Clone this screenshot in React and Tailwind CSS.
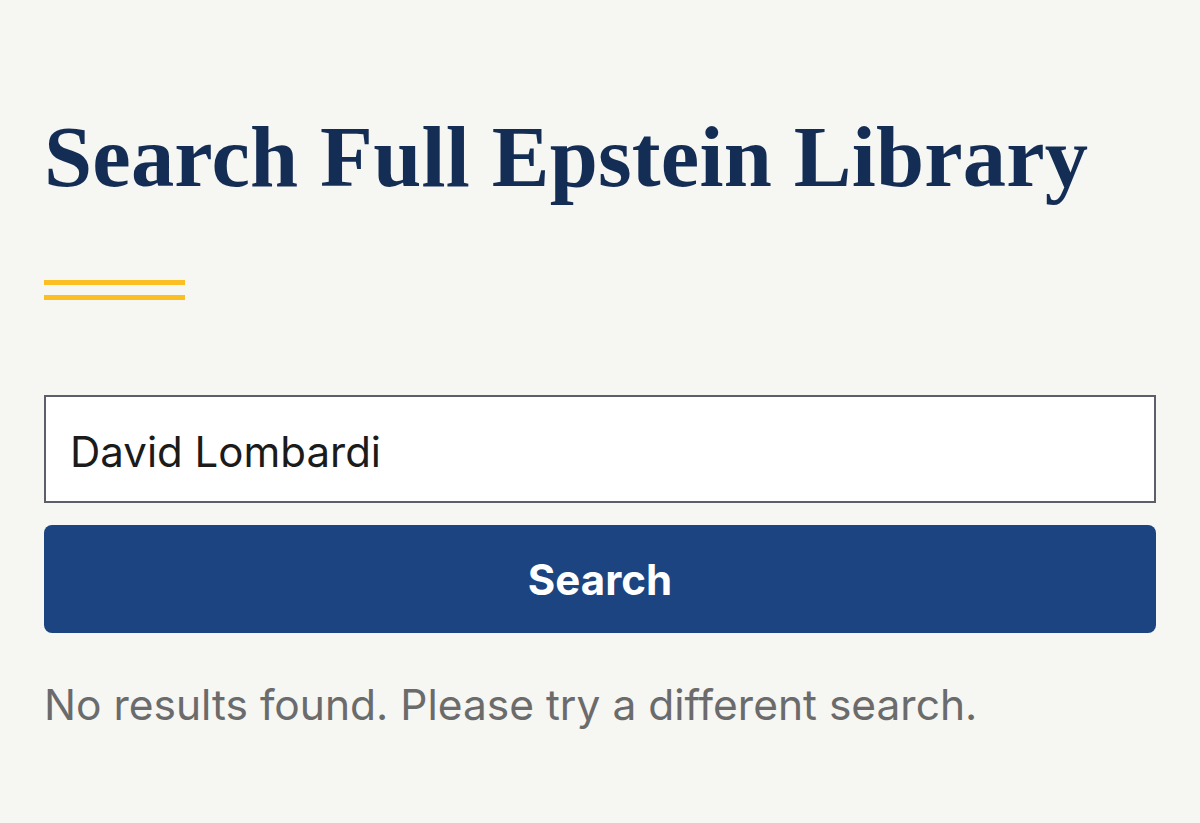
import React, { useState } from "react";

const App = () => {
  const [query, setQuery] = useState("David Lombardi");

  return (
    <main className="min-h-[823px] w-full bg-[#f6f6f3] px-[44px] pt-[110px]">
      <h1
        className="text-[86.5px] font-bold leading-[1.1] text-[#142d55] tracking-[0.2px]"
        style={{ fontFamily: '"Liberation Serif", serif' }}
      >
        Search Full Epstein Library
      </h1>
      <div className="mt-[75px] flex w-[141px] flex-col gap-[10px]">
        <span className="block h-[5px] bg-[#fbbf24]" />
        <span className="block h-[5px] bg-[#fbbf24]" />
      </div>

      <form
        className="mt-[95px] flex flex-col gap-[22px]"
        onSubmit={(e) => e.preventDefault()}
        style={{ fontFamily: 'Inter, "Noto Sans", sans-serif' }}
      >
        <input
          value={query}
          onChange={(e) => setQuery(e.target.value)}
          className="h-[108px] w-full border-2 border-[#5c5f68] bg-white px-[24px] pt-[4px] text-[42px] text-[#1b1b1b] outline-none"
        />
        <button
          type="submit"
          className="h-[108px] w-full rounded-[8px] bg-[#1b4480] text-[42px] font-bold text-white"
        >
          Search
        </button>
      </form>

      <p
        className="mt-[40px] text-[42.5px] text-[#6b6b6b]"
        style={{ fontFamily: 'Inter, "Noto Sans", sans-serif' }}
      >
        No results found. Please try a different search.
      </p>
    </main>
  );
};

export default App;
